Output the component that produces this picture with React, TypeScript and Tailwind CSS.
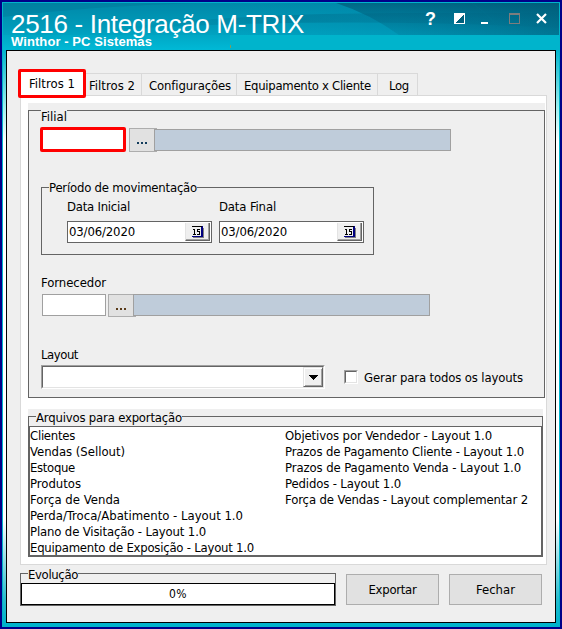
import React from 'react';

function Text({ w, className = '', children }: { w: number; className?: string; children: string }) {
  const ref = React.useRef<HTMLSpanElement>(null);
  const [spacing, setSpacing] = React.useState(0);
  React.useLayoutEffect(() => {
    const el = ref.current;
    if (el) setSpacing((w - el.getBoundingClientRect().width) / children.length);
  }, []);
  return (
    <span ref={ref} className={'inline-block whitespace-pre ' + className} style={{ letterSpacing: spacing + 'px' }}>
      {children}
    </span>
  );
}

function Backdrop() {
  return (
    <svg className="absolute inset-0" width="562" height="629" viewBox="0 0 562 629">
      <defs>
        <linearGradient id="head" x1="0" y1="0" x2="0" y2="1">
          <stop offset="0" stopColor="#0088a8" />
          <stop offset="0.5" stopColor="#009dbb" />
          <stop offset="1" stopColor="#00b9d6" />
        </linearGradient>
        <linearGradient id="shade" x1="0" y1="0" x2="1" y2="0">
          <stop offset="0" stopColor="#0090b0" stopOpacity="0.2" />
          <stop offset="0.5" stopColor="#0088aa" stopOpacity="0.45" />
          <stop offset="1" stopColor="#006482" stopOpacity="0.7" />
        </linearGradient>
        <linearGradient id="side" x1="0" y1="0" x2="0" y2="1">
          <stop offset="0" stopColor="#00b4cc" />
          <stop offset="0.1" stopColor="#9defef" />
          <stop offset="0.16" stopColor="#ffffff" />
          <stop offset="0.82" stopColor="#ffffff" />
          <stop offset="0.96" stopColor="#25bccd" />
          <stop offset="1" stopColor="#00b4cc" />
        </linearGradient>
        <linearGradient id="wave" x1="0" y1="0" x2="1" y2="0">
          <stop offset="0" stopColor="#006887" stopOpacity="0" />
          <stop offset="0.4" stopColor="#006887" stopOpacity="0.4" />
          <stop offset="1" stopColor="#006887" stopOpacity="0.15" />
        </linearGradient>
        <linearGradient id="arc" x1="0" y1="0" x2="0" y2="1">
          <stop offset="0" stopColor="#004c68" stopOpacity="0.55" />
          <stop offset="1" stopColor="#006a88" stopOpacity="0.2" />
        </linearGradient>
      </defs>
      <rect width="562" height="629" fill="#000088" />
      <rect x="2" y="2" width="558" height="625" fill="#00b4cc" />
      <rect x="3" y="50" width="3" height="573" fill="url(#side)" />
      <rect x="556" y="50" width="3" height="573" fill="url(#side)" />
      <rect x="3" y="3" width="556" height="47" fill="url(#head)" />
      <rect x="230" y="3" width="329" height="32" fill="url(#shade)" />
      <rect x="3" y="3" width="227" height="32" fill="#0090b0" opacity="0.15" />
      <path d="M3 3H200Q90 6 3 17Z" fill="#007595" opacity="0.4" />
      <path d="M110 30Q210 14 400 13H559V28Q330 16 110 30Z" fill="url(#wave)" />
      <path d="M336 3Q370 14 399 35H502Q494 18 472 3Z" fill="url(#arc)" />
      <path d="M472 3Q494 18 502 35H559V3Z" fill="url(#arc)" />
      <rect x="230" y="35" width="329" height="15" fill="#00b4cc" />
      <rect x="230" y="45" width="1" height="3" fill="#7f9c60" />
    </svg>
  );
}

function TitleIcons() {
  return (
    <svg className="absolute left-[420px] top-[8px]" width="132" height="20" viewBox="420 8 132 20" shapeRendering="crispEdges">
      <path d="M454 13H465V24H454Z" fill="#fff" />
      <path d="M464 14V23H455Z" fill="#00607c" />
      <rect x="481" y="22" width="7" height="2" fill="#fff" />
      <path d="M509.5 13.5H519.5V23.5H509.5Z" fill="none" stroke="#7d7d7d" />
      <path d="M509 14.5H520" stroke="#7d7d7d" />
      <path d="M537 14L546 23M546 14L537 23" stroke="#fff" strokeWidth="2.2" shapeRendering="auto" />
    </svg>
  );
}

function Tab({ label, w, box }: { label: string; w: number; box: string }) {
  return (
    <div className={'flex h-[22px] items-center border-r border-t border-[#d9d9d9] pt-[3px] ' + box}>
      <Text w={w}>{label}</Text>
    </div>
  );
}

function Group({ label, w, box, legend, children }: { label: string; w: number; box: string; legend: string; children: React.ReactNode }) {
  return (
    <section className={'relative border border-[#646464] ' + box}>
      <div className={'absolute flex h-[14px] items-center bg-[#efefef] ' + legend}>
        <Text w={w}>{label}</Text>
      </div>
      {children}
    </section>
  );
}

function Browse({ box, color }: { box: string; color: string }) {
  return (
    <button className={'relative -mr-[3px] w-[28px] border border-[#adadad] bg-[#e1e1e1] ' + box}>
      <svg className="absolute left-[6px] top-[13px]" width="12" height="2" shapeRendering="crispEdges">
        <path d="M1 0H3V2H1ZM5 0H7V2H5ZM9 0H11V2H9Z" fill={color} />
      </svg>
    </button>
  );
}

function DateField({ label, w }: { label: string; w: number }) {
  return (
    <div className="w-[145px]">
      <div className="flex h-[14px] items-center"><Text w={w}>{label}</Text></div>
      <div className="mt-[7px] flex h-[22px] items-center justify-between border border-[#646464] bg-white pl-px pr-px">
        <Text w={66}>03/06/2020</Text>
        <button className="flex h-[18px] w-[25px] items-center justify-center border-b border-l border-r border-b-[#646464] border-l-[#e3e3e3] border-r-[#646464] bg-[#efefef] shadow-[inset_-1px_-1px_#a0a0a0]">
          <svg width="12" height="12" viewBox="0 0 12 12" shapeRendering="crispEdges">
            <path d="M1 2H12V12H1Z" fill="#808080" />
            <path d="M0 0H11V11H0Z" fill="#000080" />
            <path d="M0 1H9V10H0Z" fill="#efefef" />
            <path d="M0 0H10V1H0Z" fill="#000" />
            <path d="M2.5 3V8M1 3.5H2M1 8.5H4M8 3.5H5.5V5.5H7.5V8.5H5" fill="none" stroke="#000" />
          </svg>
        </button>
      </div>
    </div>
  );
}

const left: [string, number][] = [
  ['Clientes', 45], ['Vendas (Sellout)', 95], ['Estoque', 45], ['Produtos', 51], ['Força de Venda', 90],
  ['Perda/Troca/Abatimento - Layout 1.0', 213], ['Plano de Visitação - Layout 1.0', 176], ['Equipamento de Exposição - Layout 1.0', 224],
];
const right: [string, number][] = [
  ['Objetivos por Vendedor - Layout 1.0', 207], ['Prazos de Pagamento Cliente - Layout 1.0', 239],
  ['Prazos de Pagamento Venda - Layout 1.0', 236], ['Pedidos - Layout 1.0', 116], ['Força de Vendas - Layout complementar 2', 243],
];

function Files({ items, className }: { items: [string, number][]; className: string }) {
  return (
    <ul className={className}>
      {items.map(([t, w]) => (
        <li key={t} className="flex h-4 items-center"><Text w={w}>{t}</Text></li>
      ))}
    </ul>
  );
}

export default function App() {
  return (
    <div className="relative h-[629px] w-[562px] overflow-hidden font-['DejaVu_Sans_Condensed','DejaVu_Sans',sans-serif] text-[13px] leading-[14px] text-black [font-stretch:condensed]">
      <Backdrop />
      <TitleIcons />
      <div className="relative flex h-full flex-col pl-[6px]">
        <header className="flex h-[50px] shrink-0 justify-between pl-[5px] font-['Liberation_Sans',Arial,sans-serif] text-white">
          <div className="pt-[12px]">
            <h1 className="h-[23px] text-[26px] leading-[24px]"><Text w={293}>2516 - Integração M-TRIX</Text></h1>
            <p className="text-[13px] font-bold leading-[14px]"><Text w={141}>Winthor - PC Sistemas</Text></p>
          </div>
          <div className="mr-[126px] pt-[9px] text-[18px] font-bold leading-[20px]">?</div>
        </header>
        <main className="h-[573px] w-[550px] border border-black bg-[#efefef] pl-[13px] pt-[18px]">
          <nav className="-ml-[2px] flex h-[26px] items-end">
            <div className="z-10 -mb-[3px] flex h-[29px] w-[68px] items-center rounded-[2px] border-[3px] border-[#ff0000] bg-white pl-[8px]">
              <Text w={46}>Filtros 1</Text>
            </div>
            <Tab label="Filtros 2" w={46} box="w-[56px] pl-[3px]" />
            <Tab label="Configurações" w={82} box="w-[95px] pl-[7px]" />
            <Tab label="Equipamento x Cliente" w={127} box="w-[141px] pl-[7px]" />
            <Tab label="Log" w={20} box="w-[40px] pl-[11px]" />
          </nav>
          <div className="h-[470px] w-[527px] border border-[#d9d9d9] bg-white pl-[7px] pt-[7px]">
            <div className="w-[517px] bg-[#efefef] pt-[7px]">
              <Group label="Filial" w={26} box="h-[288px] pl-[11px] pt-[16px]" legend="left-[12px] top-[-1px]">
                <div className="flex h-[25px] items-center">
                  <input className="mr-[3px] h-[25px] w-[86px] rounded-[2px] border-[3px] border-[#ff0000] bg-white" />
                  <Browse box="h-[24px]" color="#123c5c" />
                  <div className="z-10 h-[22px] w-[297px] border border-[#a0a0a0] bg-[#bfccda]" />
                </div>
                <Group label="Período de movimentação" w={148} box="ml-px mt-[35px] flex h-[68px] w-[333px] gap-[7px] pl-[25px] pt-[12px]" legend="left-[7px] top-[-7px]">
                  <DateField label="Data Inicial" w={63} />
                  <DateField label="Data Final" w={57} />
                </Group>
                <div className="ml-px mt-[21px] flex h-[14px] items-center"><Text w={65}>Fornecedor</Text></div>
                <div className="ml-[2px] mt-[4px] flex h-[23px] items-start">
                  <input className="mr-[2px] h-[22px] w-[64px] border border-[#a0a0a0] bg-white" />
                  <Browse box="h-[23px]" color="#5a3a18" />
                  <div className="z-10 h-[22px] w-[297px] border border-[#a0a0a0] bg-[#bfccda]" />
                </div>
                <div className="ml-px mt-[31px] flex h-[14px] items-center"><Text w={37}>Layout</Text></div>
                <div className="ml-px mt-[3px] flex items-start">
                  <div className="h-[24px] w-[284px] border border-b-white border-l-[#a0a0a0] border-r-white border-t-[#a0a0a0]">
                    <div className="flex h-full justify-end border border-b-[#e3e3e3] border-l-[#646464] border-r-[#e3e3e3] border-t-[#646464] bg-white">
                      <button className="flex h-[20px] w-[20px] items-center justify-center border border-b-[#646464] border-l-[#e3e3e3] border-r-[#646464] border-t-[#e3e3e3] bg-[#efefef] shadow-[inset_1px_1px_#ffffff,inset_-1px_-1px_#a0a0a0]">
                        <svg width="9" height="5" shapeRendering="crispEdges"><path d="M0 0H9V1H8V2H7V3H6V4H5V5H4V4H3V3H2V2H1V1H0Z" fill="#000" /></svg>
                      </button>
                    </div>
                  </div>
                  <label className="ml-[19px] mt-[5px] flex h-[14px] items-center">
                    <span className="h-[14px] w-[14px] border border-b-white border-l-[#a0a0a0] border-r-white border-t-[#a0a0a0]">
                      <span className="block h-full border border-b-[#e3e3e3] border-l-[#646464] border-r-[#e3e3e3] border-t-[#646464] bg-white" />
                    </span>
                    <Text w={159} className="ml-[6px] mt-px">Gerar para todos os layouts</Text>
                  </label>
                </div>
              </Group>
            </div>
            <div className="mt-[11px] w-[515px] bg-[#efefef] pt-[7px]">
              <Group label="Arquivos para exportação" w={146} box="h-[141px] pt-[9px]" legend="left-[7px] top-[-6px]">
                <div className="relative flex h-[130px] border border-[#646464] bg-white pt-px">
                  <Files items={left} className="w-[255px]" />
                  <Files items={right} className="" />
                </div>
              </Group>
            </div>
          </div>
          <div className="mt-[8px] flex">
            <Group label="Evolução" w={50} box="h-[33px] w-[316px] pt-[9px]" legend="left-[7px] top-[-6px]">
              <div className="relative flex h-[22px] items-center justify-center border border-black bg-white text-[12px]"><Text w={18}>0%</Text></div>
            </Group>
            <button className="ml-[10px] mt-px h-[31px] w-[93px] border border-[#adadad] bg-[#e1e1e1]"><Text w={48}>Exportar</Text></button>
            <button className="ml-[10px] mt-px h-[31px] w-[93px] border border-[#adadad] bg-[#e1e1e1]"><Text w={39}>Fechar</Text></button>
          </div>
        </main>
      </div>
    </div>
  );
}
